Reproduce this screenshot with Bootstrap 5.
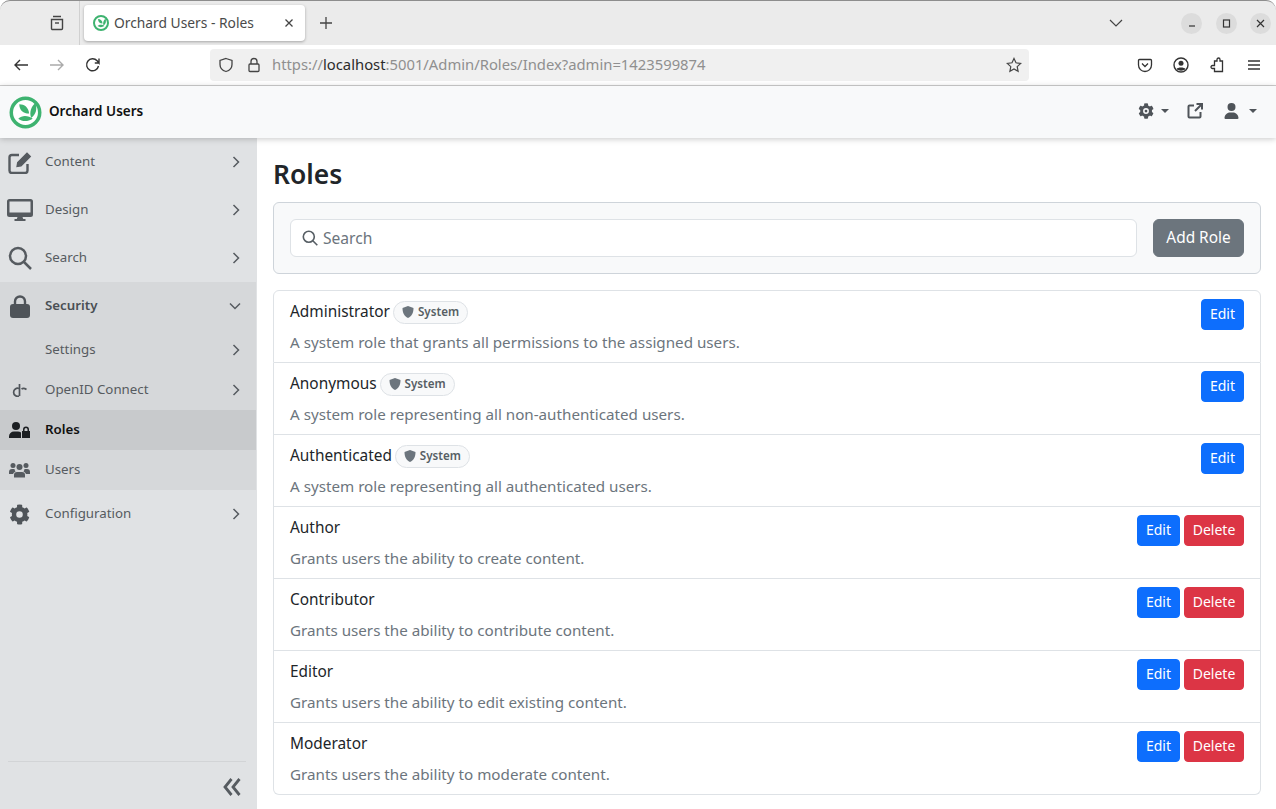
<!DOCTYPE html>
<html lang="en">
<head>
  <meta charset="UTF-8">
  <meta name="viewport" content="width=device-width, initial-scale=1.0">
  <title>Orchard Users - Roles</title>
  <link href="https://cdn.jsdelivr.net/npm/bootstrap@5.3.0/dist/css/bootstrap.min.css" rel="stylesheet">
  <style>
    html, body { height: 809px; overflow: hidden; }
    body { font-family: "Noto Sans", "Open Sans", sans-serif; font-size: 15.4px; color: #212529; background: #fff; }
    svg { display: block; flex: none; }

    /* browser frame */
    .tab-strip { height: 45px; background: #ebebeb; border-top: 1px solid #8d8d8d; border-radius: 10px 10px 0 0; }
    .tab-view { width: 80px; height: 44px; border-right: 1px solid #d0d0d0; padding-right: 14px; }
    .tab-item { width: 221px; height: 36px; margin: 4px 0 0 4px; background: #fff; border-radius: 4px; box-shadow: 0 1px 3px rgba(0,0,0,.3); padding: 0 11px 0 9px; font-size: 13.8px; color: #4a4a4a; white-space: nowrap; }
    .win-btn { width: 21px; height: 21px; border-radius: 50%; background: #dcdcdc; }
    .win-group { height: 44px; gap: 13.5px; padding-right: 5px; }
    .tool-bar { height: 41px; background: #fff; border-bottom: 1px solid #cfcfcf; padding-bottom: 1px; }
    .url-box { width: 819px; height: 32px; margin-left: 30px; background: #f0f0f0; border-radius: 4px; font-size: 14.8px; color: #8f8f8f; padding: 0 7px 0 8px; white-space: nowrap; }
    .url-box b { font-weight: 400; color: #2b2b2b; }
    .tool-left { width: 180px; padding-left: 13px; }

    /* admin top bar */
    .admin-bar { height: 52px; background: #f8f9fa; box-shadow: 0 1px 6px rgba(0,0,0,.22); padding: 0 19px 2px 9px; position: relative; z-index: 2; }
    .brand-logo { margin-top: 2px; }
    .brand-name { font-size: 13.5px; font-weight: 600; color: #111; margin-left: 7px; }
    .mini-caret { width: 0; height: 0; border-top: 4px solid #4f5459; border-left: 4px solid transparent; border-right: 4px solid transparent; }

    /* sidebar */
    .app-body { height: 672px; }
    .side-nav { width: 257px; background: #e0e2e4; padding-right: 1px; }
    .side-link { height: 48px; padding: 0 16px 0 7px; color: #565b60; font-size: 13.3px; text-decoration: none; }
    .side-link.sub-link { height: 40px; }
    .side-ico { width: 38px; }
    .side-open { background: #d6d8da; }
    .side-current { background: #c8cacc; color: #111; font-weight: 600; }
    .side-strong { font-weight: 600; color: #4a4f54; }
    .side-foot { border-top: 1px solid #d2d4d6; margin: 0 10px 0 8px; height: 49px; }

    /* content */
    .main-pane { padding: 0 15px 0 16px; }
    .page-title { font-size: 26.4px; font-weight: 600; line-height: 34px; margin: 19px 0 11px; }
    .filter-box { height: 72px; background: #f8f9fa; border: 1px solid #ced4da; padding: 0 16px; margin-bottom: 16px; border-radius: 6px; }
    .search-wrap { height: 38px; }
    .search-ico { position: absolute; left: 12px; top: 11px; }
    .search-input { height: 38px; padding-left: 32px; font-size: 15.6px; }
    .search-input::placeholder { color: #6c757d; }
    .add-btn { width: 91px; height: 38px; padding: 0; font-size: 15.4px; }
    .role-row { height: 72px; padding: 8px 16px 0; font-size: 15.4px; }
    .role-row:first-child { height: 73px; }
    .role-desc { color: #6c757d; margin-top: 7px; font-size: 15.2px; line-height: 22px; }
    .role-name { line-height: 24px; margin-top: 1px; }
    .sys-tag { font-size: 11.6px; font-weight: 600; color: #565e64; background: #f8f9fa; border: 1px solid #dee2e6; padding: 0 8px; height: 23px; margin-left: 3px; }
    .row-btn { font-size: 14px; height: 31px; }
    .edit-btn { width: 43px; padding: 0 0 2px; }
    .del-btn { width: 60px; padding: 0 0 2px; }
  </style>
</head>
<body>
  <!-- Browser frame -->
  <div class="tab-strip d-flex align-items-start">
    <div class="tab-view d-flex align-items-center justify-content-end">
      <svg width="16" height="16" viewBox="0 0 16 16" fill="none" stroke="#444" stroke-width="1.4"><path d="M4 1.5h8M2.500 4.500h11v9a1 1 0 0 1-1 1h-9a1 1 0 0 1-1-1z"/><path d="M6 8h4"/></svg>
    </div>
    <div class="tab-item d-flex align-items-center">
      <svg width="16" height="16" viewBox="0 0 32 32" style="margin-right:5px"><circle cx="16" cy="16" r="14" fill="#fff" stroke="#3eb370" stroke-width="4"/><path d="M10 8c5 0 9 3 9 9-5 0-9-3-9-9zM25 7c2 5 1 11-4 14-2-5 0-11 4-14zM9 22c4-4 10-3 14 0-5 3-10 3-14 0z" fill="#3eb370"/></svg>
      <span class="flex-grow-1">Orchard Users - Roles</span>
      <svg width="10" height="10" viewBox="0 0 10 10" stroke="#444" stroke-width="1.300"><path d="M1.500 1.500l7 7M8.500 1.500l-7 7"/></svg>
    </div>
    <svg width="12" height="12" viewBox="0 0 12 12" stroke="#444" stroke-width="1.300" style="margin:16px 0 0 15px"><path d="M6 0v12M0 6h12"/></svg>
    <div class="ms-auto d-flex align-items-center win-group">
      <svg width="14" height="8" viewBox="0 0 14 8" fill="none" stroke="#444" stroke-width="1.200" style="margin-right:45px"><path d="M1 1l6 6 6-6"/></svg>
      <div class="win-btn d-flex align-items-center justify-content-center"><svg width="8" height="8" viewBox="0 0 8 8" stroke="#333" stroke-width="1.200"><path d="M1 7h6"/></svg></div>
      <div class="win-btn d-flex align-items-center justify-content-center"><svg width="9" height="9" viewBox="0 0 9 9" fill="none" stroke="#333" stroke-width="1.200"><rect x="1.500" y="1" width="6" height="7"/></svg></div>
      <div class="win-btn d-flex align-items-center justify-content-center"><svg width="9" height="9" viewBox="0 0 9 9" stroke="#333" stroke-width="1.200"><path d="M1 1l7 7M8 1l-7 7"/></svg></div>
    </div>
  </div>
  <div class="tool-bar d-flex align-items-center">
    <div class="tool-left d-flex align-items-center">
      <svg width="16" height="14" viewBox="0 0 16 14" fill="none" stroke="#333" stroke-width="1.400"><path d="M15 7H2M7 2L2 7l5 5"/></svg>
      <svg width="16" height="14" viewBox="0 0 16 14" fill="none" stroke="#aaa" stroke-width="1.400" style="margin-left:20px"><path d="M1 7h13M9 2l5 5-5 5"/></svg>
      <svg width="16" height="16" viewBox="0 0 16 16" fill="none" stroke="#333" stroke-width="1.400" style="margin-left:20px"><path d="M13.500 9a6 6 0 1 1-1.400-5.200L14 6V1.500M14 6H9.800"/></svg>
    </div>
    <div class="url-box d-flex align-items-center">
      <svg width="16" height="16" viewBox="0 0 16 16" fill="none" stroke="#444" stroke-width="1.300" class="me-2"><path d="M8 1.500l6 2v4c0 3.500-2.500 6-6 7-3.500-1-6-3.500-6-7v-4z"/></svg>
      <svg width="14" height="16" viewBox="0 0 14 16" fill="none" stroke="#444" stroke-width="1.300" style="margin:0 11px 0 5px"><rect x="2" y="7" width="10" height="7.500" rx="1"/><path d="M4 7V4.500a3 3 0 0 1 6 0V7"/></svg>
      <span class="flex-grow-1">https://<b>localhost</b>:5001/Admin/Roles/Index?admin=1423599874</span>
      <svg width="16" height="16" viewBox="0 0 16 16" fill="none" stroke="#444" stroke-width="1.200"><path d="M8 1.500l2 4.300 4.700.6-3.500 3.200.9 4.700L8 12l-4.100 2.300.9-4.700L1.300 6.400 6 5.800z"/></svg>
    </div>
    <div class="d-flex align-items-center" style="margin-left:108px;gap:20px">
      <svg width="16" height="16" viewBox="0 0 16 16" fill="none" stroke="#333" stroke-width="1.300"><path d="M2.500 2.500h11a1 1 0 0 1 1 1V8a6.500 6.500 0 0 1-13 0V3.500a1 1 0 0 1 1-1z"/><path d="M5 6.500l3 3 3-3"/></svg>
      <svg width="16" height="16" viewBox="0 0 16 16"><circle cx="8" cy="8" r="7" fill="none" stroke="#333" stroke-width="1.400"/><circle cx="8" cy="6.300" r="2.500" fill="#333"/><path d="M3.500 12c1-2 8-2 9 0-2 2.200-7 2.200-9 0z" fill="#333"/></svg>
      <svg width="16" height="16" viewBox="0 0 16 16" fill="none" stroke="#333" stroke-width="1.300"><path d="M6.500 3.500H9V2a1.500 1.500 0 0 1 3 0v1.500h2.500V14H6.500v-3H4.500a1.500 1.500 0 0 1 0-3h2z" transform="translate(-1 .5)"/></svg>
      <svg width="14" height="12" viewBox="0 0 14 12" stroke="#333" stroke-width="1.400" style="margin-left:2px"><path d="M1 2h12M1 6h12M1 10h12"/></svg>
    </div>
  </div>

  <!-- Admin top bar -->
  <nav class="admin-bar d-flex align-items-center">
    <svg class="brand-logo" width="33" height="33" viewBox="0 0 32 32"><circle cx="16" cy="16" r="13.800" fill="#fff" stroke="#3eb370" stroke-width="3.400"/><path d="M10 8c5 0 9 3 9.500 9-5.500 0-9.500-3-9.500-9zM25.500 7c2 5 1 11-4 14-2-5 0-11 4-14zM9 22c4-4 10-3 14 0-5 3-10 3-14 0z" fill="#3eb370"/></svg>
    <span class="brand-name">Orchard Users</span>
    <div class="ms-auto d-flex align-items-center">
      <svg width="16" height="16" viewBox="0 0 512 512" fill="#4f5459"><path fill-rule="evenodd" d="M487 316l-42-25a192 192 0 0 0 0-70l42-25c5-3 7-9 5-14-11-35-29-66-54-93-3-4-9-5-14-2l-42 25c-18-15-38-27-60-35V28c0-6-4-10-9-11a248 248 0 0 0-108 0c-5 1-9 5-9 11v49c-22 8-42 20-60 35L94 87c-5-3-11-2-14 2-25 27-43 58-54 93-2 5 0 11 5 14l42 25a192 192 0 0 0 0 70l-42 25c-5 3-7 9-5 14 11 35 29 66 54 93 3 4 9 5 14 2l42-25c18 15 38 27 60 35v49c0 6 4 10 9 11 36 8 73 8 108 0 5-1 9-5 9-11v-49c22-8 42-20 60-35l42 25c5 3 11 2 14-2 25-27 43-58 54-93 2-5 0-11-5-14zM256 350a94 94 0 1 1 0-188 94 94 0 0 1 0 188zM256 300a44 44 0 1 0 0-88 44 44 0 0 0 0 88z"/></svg>
      <span class="mini-caret" style="margin-left:7px"></span>
      <svg width="16" height="16" viewBox="0 0 16 16" fill="none" stroke="#4f5459" stroke-width="2" style="margin-left:18px"><path d="M7 2.500H2.500a1 1 0 0 0-1 1v10a1 1 0 0 0 1 1h10a1 1 0 0 0 1-1V9M8 8l6.500-6.500M9.500 1h5.500v5.500"/></svg>
      <svg width="15" height="16" viewBox="0 0 448 512" fill="#4f5459" style="margin-left:21px"><path d="M224 256a128 128 0 1 0 0-256 128 128 0 0 0 0 256zm-45 48C80 304 0 384 0 483c0 16 13 29 29 29h390c16 0 29-13 29-29 0-99-80-179-179-179z"/></svg>
      <span class="mini-caret" style="margin-left:10px"></span>
    </div>
  </nav>

  <div class="app-body d-flex">
    <!-- Sidebar -->
    <aside class="side-nav d-flex flex-column">
      <a class="side-link d-flex align-items-center">
        <span class="side-ico"><svg width="24" height="23" viewBox="0 0 24 23" fill="none" stroke="#565b60" stroke-width="2.400" style="margin-left:1px"><path d="M11 4H4a2.500 2.500 0 0 0-2.500 2.500v13A2.500 2.500 0 0 0 4 22h13a2.500 2.500 0 0 0 2.500-2.500V13"/><path d="M9 15.500l.7-4L19 2.200l3.300 3.300-9.300 9.300z" fill="#565b60" stroke-width="1.300"/></svg></span>
        <span class="flex-grow-1">Content</span>
        <svg width="8" height="12" viewBox="0 0 8 12" fill="none" stroke="#565b60" stroke-width="1.500"><path d="M1.500 1l5 5-5 5"/></svg>
      </a>
      <a class="side-link d-flex align-items-center">
        <span class="side-ico"><svg width="26" height="22" viewBox="0 0 26 22" fill="#565b60"><path d="M2.500 0h21A2.500 2.500 0 0 1 26 2.500v13a2.500 2.500 0 0 1-2.500 2.500h-21A2.500 2.500 0 0 1 0 15.500v-13A2.500 2.500 0 0 1 2.500 0zM2.500 2.500v11h21v-11zM10.500 18h5l.7 2h2.300v2h-11v-2h2.300z"/></svg></span>
        <span class="flex-grow-1">Design</span>
        <svg width="8" height="12" viewBox="0 0 8 12" fill="none" stroke="#565b60" stroke-width="1.500"><path d="M1.500 1l5 5-5 5"/></svg>
      </a>
      <a class="side-link d-flex align-items-center">
        <span class="side-ico"><svg width="24" height="24" viewBox="0 0 24 24" fill="none" stroke="#565b60" stroke-width="2.500" style="margin-left:1px"><circle cx="10" cy="10" r="8"/><path d="M16 16l7 7"/></svg></span>
        <span class="flex-grow-1">Search</span>
        <svg width="8" height="12" viewBox="0 0 8 12" fill="none" stroke="#565b60" stroke-width="1.500"><path d="M1.500 1l5 5-5 5"/></svg>
      </a>
      <div class="side-open">
        <a class="side-link d-flex align-items-center side-strong">
          <span class="side-ico"><svg width="20" height="23" viewBox="0 0 20 23" style="margin-left:3px"><path d="M5 10V6.500a5 5 0 0 1 10 0V10" fill="none" stroke="#4f5459" stroke-width="2.400"/><rect y="9" width="20" height="14" rx="3" fill="#4f5459"/></svg></span>
          <span class="flex-grow-1">Security</span>
          <svg width="12" height="8" viewBox="0 0 12 8" fill="none" stroke="#565b60" stroke-width="1.500" style="margin-right:-1px"><path d="M1 1.500l5 5 5-5"/></svg>
        </a>
        <a class="side-link sub-link d-flex align-items-center">
          <span class="side-ico"></span>
          <span class="flex-grow-1">Settings</span>
          <svg width="8" height="12" viewBox="0 0 8 12" fill="none" stroke="#565b60" stroke-width="1.500"><path d="M1.500 1l5 5-5 5"/></svg>
        </a>
        <a class="side-link sub-link d-flex align-items-center">
          <span class="side-ico"><svg width="16" height="14" viewBox="0 0 16 14" fill="none" stroke="#4f5459" stroke-width="1.700" style="margin-left:5px"><path d="M7.500 1v12"/><path d="M7 5.500a4 4 0 1 0 0 7.500"/><path d="M9.500 6c1.500-1 3-.8 5 .5"/></svg></span>
          <span class="flex-grow-1">OpenID Connect</span>
          <svg width="8" height="12" viewBox="0 0 8 12" fill="none" stroke="#565b60" stroke-width="1.500"><path d="M1.500 1l5 5-5 5"/></svg>
        </a>
        <a class="side-link sub-link side-current d-flex align-items-center">
          <span class="side-ico"><svg width="21" height="16" viewBox="0 0 21 16" fill="#1c1f22" style="margin-left:2px"><circle cx="7" cy="4" r="4"/><path d="M5 9.500h4a5 5 0 0 1 3 1V16H0v-1.500A5 5 0 0 1 5 9.500z"/><path d="M14 9V7.500a3 3 0 0 1 6 0V9h1v7h-8V9zm1.500 0h3V7.500a1.500 1.500 0 0 0-3 0z"/></svg></span>
          <span>Roles</span>
        </a>
        <a class="side-link sub-link d-flex align-items-center">
          <span class="side-ico"><svg width="21" height="16" viewBox="0 0 21 16" fill="#565b60" style="margin-left:2px"><circle cx="4" cy="3.500" r="2.500"/><circle cx="17" cy="3.500" r="2.500"/><circle cx="10.500" cy="5" r="3"/><path d="M0 10a3 3 0 0 1 3-3h2.500a4 4 0 0 0 1 2.500A5 5 0 0 0 4 12H0zM21 10a3 3 0 0 0-3-3h-2.500a4 4 0 0 1-1 2.500A5 5 0 0 1 17 12h4zM8 10h5a3 3 0 0 1 3 3v2.500H5V13a3 3 0 0 1 3-3z"/></svg></span>
          <span>Users</span>
        </a>
      </div>
      <a class="side-link d-flex align-items-center">
        <span class="side-ico"><svg width="21" height="21" viewBox="0 0 512 512" fill="#4f5459" style="margin-left:2px"><path d="M487 316l-42-25a192 192 0 0 0 0-70l42-25c5-3 7-9 5-14-11-35-29-66-54-93-3-4-9-5-14-2l-42 25c-18-15-38-27-60-35V28c0-6-4-10-9-11a248 248 0 0 0-108 0c-5 1-9 5-9 11v49c-22 8-42 20-60 35L94 87c-5-3-11-2-14 2-25 27-43 58-54 93-2 5 0 11 5 14l42 25a192 192 0 0 0 0 70l-42 25c-5 3-7 9-5 14 11 35 29 66 54 93 3 4 9 5 14 2l42-25c18 15 38 27 60 35v49c0 6 4 10 9 11 36 8 73 8 108 0 5-1 9-5 9-11v-49c22-8 42-20 60-35l42 25c5 3 11 2 14-2 25-27 43-58 54-93 2-5 0-11-5-14zM256 336a80 80 0 1 1 0-160 80 80 0 0 1 0 160z"/></svg></span>
        <span class="flex-grow-1">Configuration</span>
        <svg width="8" height="12" viewBox="0 0 8 12" fill="none" stroke="#565b60" stroke-width="1.500"><path d="M1.500 1l5 5-5 5"/></svg>
      </a>
      <div class="mt-auto side-foot d-flex align-items-center justify-content-end" style="padding-top:2px">
        <svg width="18" height="18" viewBox="0 0 18 18" fill="none" stroke="#565b60" stroke-width="2.800" style="margin-right:5px"><path d="M8.500 1L2 9l6.500 8M16.500 1L10 9l6.500 8"/></svg>
      </div>
    </aside>

    <!-- Main content -->
    <main class="main-pane flex-grow-1" id="mainPane">
      <h1 class="page-title">Roles</h1>
      <div class="filter-box d-flex align-items-center gap-3">
        <div class="search-wrap position-relative flex-grow-1">
          <svg class="search-ico" width="16" height="16" viewBox="0 0 16 16" fill="none" stroke="#565e64" stroke-width="1.600"><circle cx="6.800" cy="6.800" r="5.500"/><path d="M10.800 10.800l4.500 4.500"/></svg>
          <input class="form-control search-input" type="text" placeholder="Search">
        </div>
        <button class="btn btn-secondary add-btn" type="button">Add Role</button>
      </div>
      <ul class="list-group" id="roleList"></ul>
    </main>
  </div>

  <script src="https://cdn.jsdelivr.net/npm/bootstrap@5.3.0/dist/js/bootstrap.bundle.min.js"></script>
  <script>
    const roles = [
      ['Administrator', 'A system role that grants all permissions to the assigned users.', true],
      ['Anonymous', 'A system role representing all non-authenticated users.', true],
      ['Authenticated', 'A system role representing all authenticated users.', true],
      ['Author', 'Grants users the ability to create content.', false],
      ['Contributor', 'Grants users the ability to contribute content.', false],
      ['Editor', 'Grants users the ability to edit existing content.', false],
      ['Moderator', 'Grants users the ability to moderate content.', false]
    ];

    const shield = '<svg width="12" height="12" viewBox="0 0 12 12" fill="#6c757d" class="me-1"><path d="M6 0l5.500 2c0 4.500-1.500 8.200-5.500 10C2 10.200.5 6.500.5 2z"/></svg>';

    document.getElementById('roleList').innerHTML = roles.map(([name, desc, system]) => `
      <li class="list-group-item role-row d-flex justify-content-between align-items-start">
        <div>
          <div class="role-name d-flex align-items-center">${name}
            ${system ? `<span class="sys-tag rounded-pill d-inline-flex align-items-center">${shield}System</span>` : ''}
          </div>
          <div class="role-desc">${desc}</div>
        </div>
        <div class="d-flex gap-1">
          <a class="btn btn-primary btn-sm row-btn edit-btn d-flex align-items-center justify-content-center">Edit</a>
          ${system ? '' : '<a class="btn btn-danger btn-sm row-btn del-btn d-flex align-items-center justify-content-center">Delete</a>'}
        </div>
      </li>`).join('');
  </script>
</body>
</html>
